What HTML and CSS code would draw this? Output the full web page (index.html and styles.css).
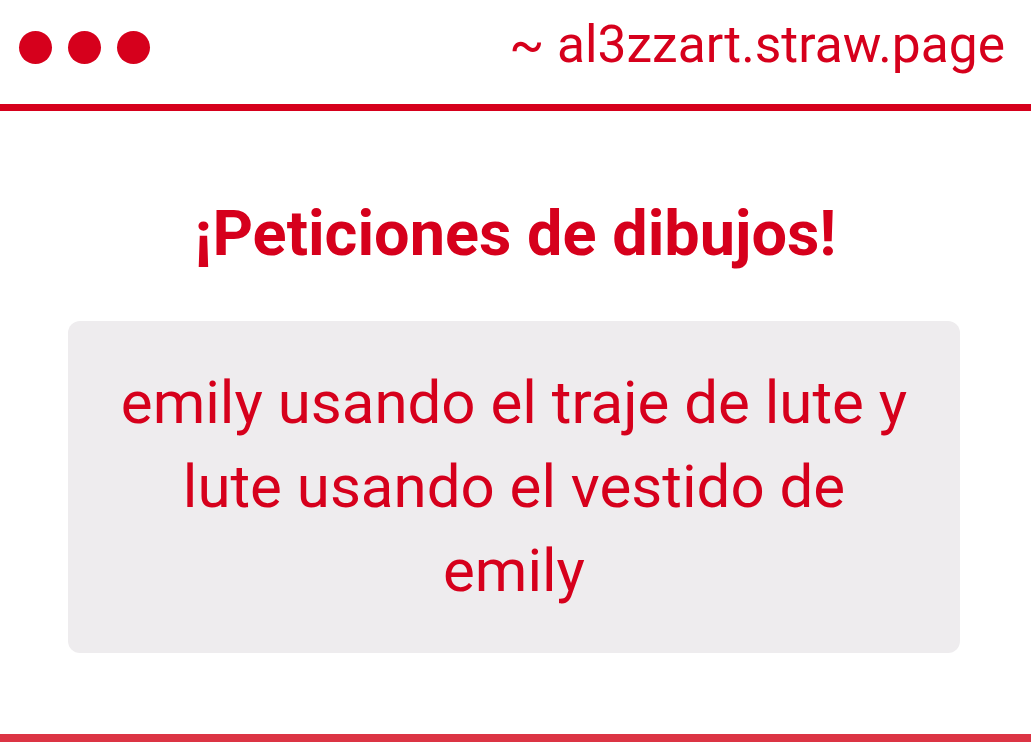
FILE: index.html
```html
<!DOCTYPE html>
<html lang="es">
<head>
    <meta charset="UTF-8">
    <meta name="viewport" content="width=device-width, initial-scale=1.0">
    <title>al3zzart.straw.page</title>
    <link rel="stylesheet" href="styles.css">
</head>
<body>
    <div class="window">
        <header class="bar">
            <div class="dots">
                <span class="dot"></span>
                <span class="dot"></span>
                <span class="dot"></span>
            </div>
            <div class="address">~ al3zzart.straw.page</div>
        </header>
        <main class="content">
            <h1 class="title">¡Peticiones de dibujos!</h1>
            <div class="request">
                <p>emily usando el traje de lute y lute usando el vestido de emily</p>
            </div>
        </main>
        <div class="bottom-line"></div>
    </div>
</body>
</html>
```

FILE: styles.css
```css
body {
    margin: 0;
    background: #fff;
    font-family: Roboto, "Noto Sans", sans-serif;
    color: #d6001c;
}
.window {
    height: 750px;
    display: flex;
    flex-direction: column;
}
.bar {
    height: 104px;
    display: flex;
    align-items: center;
    justify-content: space-between;
    padding: 0 26px 0 19px;
    border-bottom: 7px solid #d6001c;
    box-sizing: content-box;
}
.dots {
    display: flex;
    gap: 16px;
    margin-top: -10px;
}
.dot {
    width: 33px;
    height: 33px;
    border-radius: 50%;
    background: #d6001c;
}
.address {
    font-size: 51.5px;
    line-height: 60px;
    margin-top: -14px;
}
.content {
    flex: 1;
    display: flex;
    flex-direction: column;
}
.title {
    margin: 86px 0 0;
    text-align: center;
    font-size: 63px;
    font-weight: 700;
    line-height: 74px;
}
.request {
    margin: 50px 71px 0 68px;
    background: #eeecee;
    border-radius: 12px;
    padding: 40px;
    text-align: center;
}
.request p {
    margin: 0;
    font-size: 60px;
    line-height: 84px;
}
.bottom-line {
    height: 8px;
    margin-bottom: 8px;
    background: #dc3444;
}
```
